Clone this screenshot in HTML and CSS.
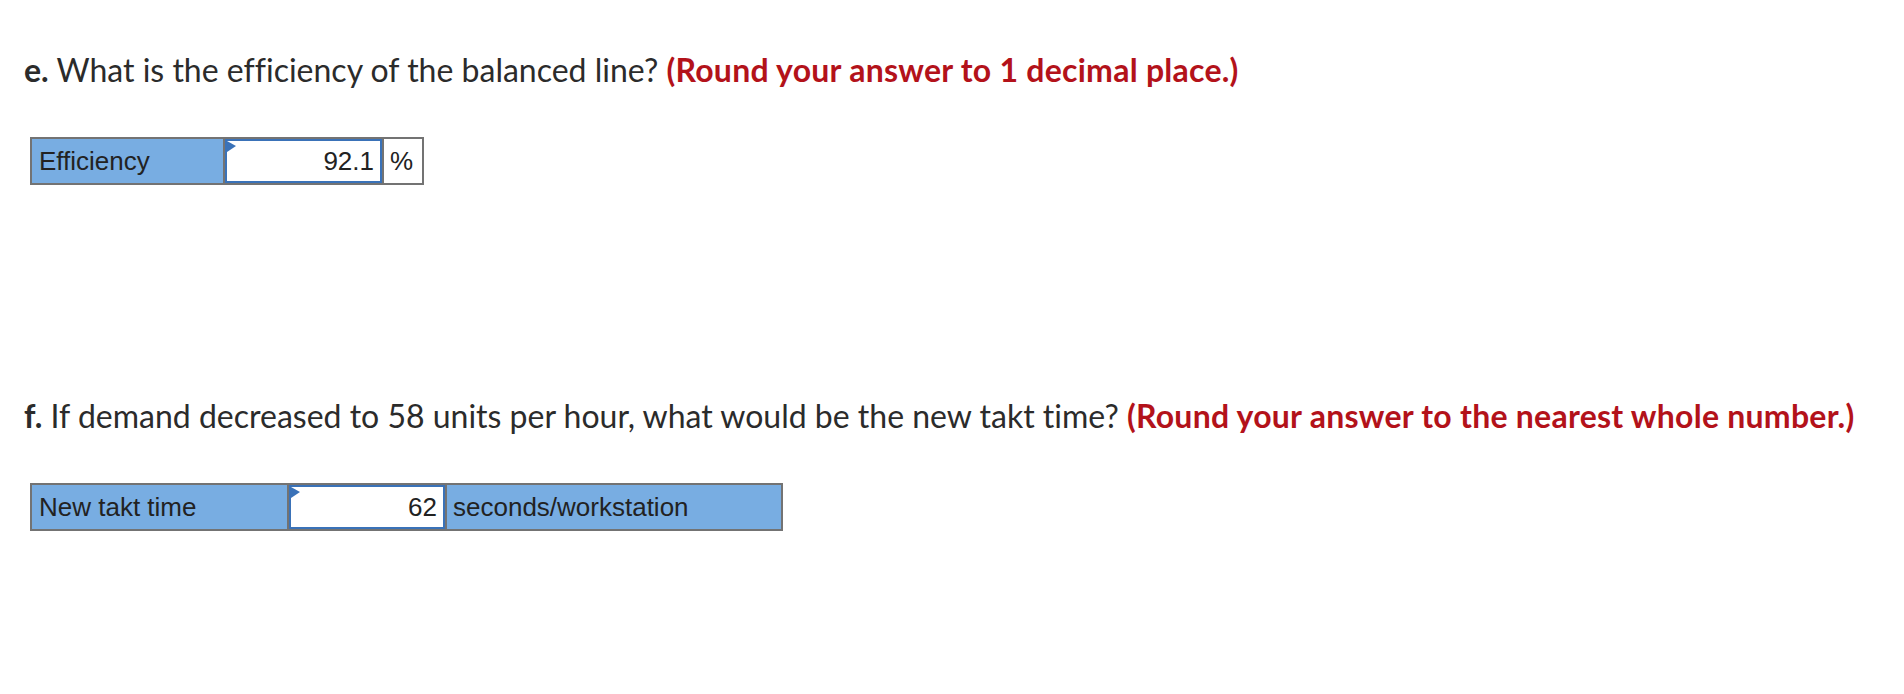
FILE: index.html
```html
<!DOCTYPE html>
<html lang="en">
<head>
<meta charset="utf-8">
<title>Line balancing</title>
<link rel="stylesheet" href="styles.css">
</head>
<body>
<main class="page">
  <section class="question q-e">
    <p class="prompt"><b>e.</b> What is the efficiency of the balanced line? <span class="hint">(Round your answer to 1 decimal place.)</span></p>
    <div class="answer answer-e">
      <div class="cell label">Efficiency</div>
      <div class="cell entry"><div class="field"><svg class="flag" width="9" height="11" viewBox="0 0 9 11"><polygon points="0,0 9,5 0,11"/></svg>92.1</div></div>
      <div class="cell unit">%</div>
    </div>
  </section>
  <section class="question q-f">
    <p class="prompt"><b>f.</b> If demand decreased to 58 units per hour, what would be the new takt time? <span class="hint">(Round your answer to the nearest whole number.)</span></p>
    <div class="answer answer-f">
      <div class="cell label">New takt time</div>
      <div class="cell entry"><div class="field"><svg class="flag" width="9" height="11" viewBox="0 0 9 11"><polygon points="0,0 9,5 0,11"/></svg>62</div></div>
      <div class="cell unit unit-blue">seconds/workstation</div>
    </div>
  </section>
</main>
</body>
</html>
```
FILE: styles.css
```css
* { box-sizing: border-box; }
html, body { margin: 0; padding: 0; background: #ffffff; }
body { width: 1904px; height: 694px; overflow: hidden; }

.page {
  padding: 50px 0 0 24px;
  font-family: "Lato", "Open Sans", sans-serif;
  color: #2b2b2b;
}

.question { margin: 0; }
.q-f { margin-top: 211px; }

.prompt {
  margin: 0;
  font-size: 32px;
  line-height: 40px;
  white-space: nowrap;
  font-variant-ligatures: none;
}
.prompt b { font-weight: 700; }
.hint { color: #b3121a; font-weight: 700; letter-spacing: 0.25px; }

.answer {
  display: flex;
  margin: 47px 0 0 6px;
  height: 48px;
  border: 2px solid #737373;
  font-family: "Liberation Sans", Arial, sans-serif;
  font-size: 26px;
  color: #222222;
}
.answer-e { width: 394px; }
.answer-f { width: 753px; }

.cell {
  display: flex;
  align-items: center;
  height: 100%;
}
.cell + .cell { border-left: 2px solid #737373; }

.label {
  background: #78ade2;
  padding-left: 7px;
}
.answer-e .label { width: 191px; }
.answer-f .label { width: 255px; }

.entry { background: #ffffff; }
.answer-e .entry { width: 159px; }
.answer-f .entry { width: 158px; }

.field {
  position: relative;
  width: 100%;
  height: 100%;
  border: 2px solid #3a72b8;
  display: flex;
  align-items: center;
  justify-content: flex-end;
  padding-right: 6px;
}
.flag {
  position: absolute;
  left: 0;
  top: 0;
  fill: #3a72b8;
}

.unit { background: #ffffff; padding-left: 6px; }
.answer-e .unit { width: 40px; }
.answer-f .unit { width: 336px; }
.unit-blue { background: #78ade2; padding-left: 6px; }
```
